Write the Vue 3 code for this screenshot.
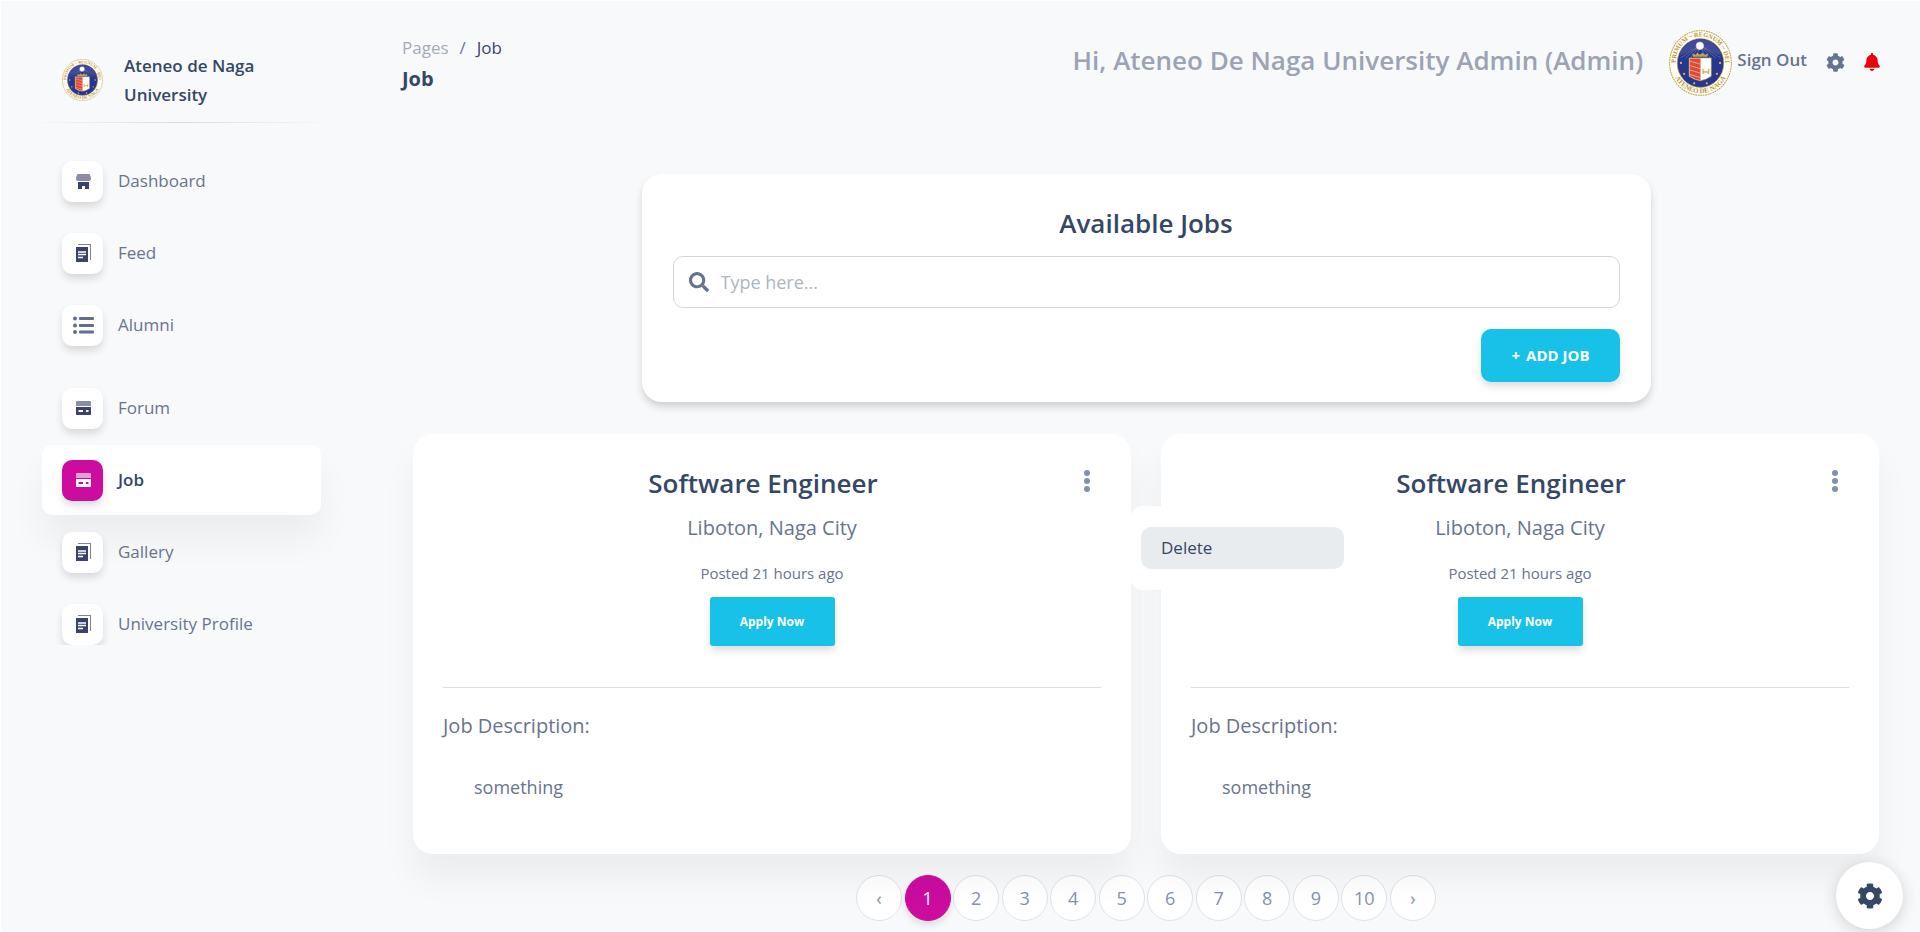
<script setup>
import { ref, h } from 'vue'

const nav = [
  { label: 'Dashboard', icon: 'shop' },
  { label: 'Feed', icon: 'docs' },
  { label: 'Alumni', icon: 'list' },
  { label: 'Forum', icon: 'card', spaced: true },
  { label: 'Job', icon: 'card', active: true },
  { label: 'Gallery', icon: 'docs' },
  { label: 'University Profile', icon: 'docs' },
]

const jobs = [
  { id: 1, title: 'Software Engineer', place: 'Liboton, Naga City', posted: 'Posted 21 hours ago', text: 'something', menu: true },
  { id: 2, title: 'Software Engineer', place: 'Liboton, Naga City', posted: 'Posted 21 hours ago', text: 'something', menu: false },
]

const pages = ['‹', '1', '2', '3', '4', '5', '6', '7', '8', '9', '10', '›']
const current = ref('1')
const query = ref('')

const GEAR =
  'M487.4 315.7l-42.6-24.6c4.3-23.2 4.3-47 0-70.2l42.6-24.6c4.9-2.8 7.1-8.6 5.5-14-11.1-35.6-30-67.8-54.7-94.6-3.8-4.1-10-5.1-14.8-2.3L380.8 110c-17.9-15.4-38.5-27.3-60.8-35.1V25.8c0-5.6-3.9-10.5-9.4-11.7-36.7-8.2-74.3-7.8-109.2 0-5.5 1.2-9.4 6.1-9.4 11.7V75c-22.2 7.9-42.8 19.8-60.8 35.1L88.7 85.5c-4.9-2.8-11-1.9-14.8 2.3-24.7 26.7-43.6 58.9-54.7 94.6-1.7 5.4.6 11.2 5.5 14L67.3 221c-4.3 23.2-4.3 47 0 70.2l-42.6 24.6c-4.9 2.8-7.1 8.6-5.5 14 11.1 35.6 30 67.8 54.7 94.6 3.8 4.1 10 5.1 14.8 2.3l42.6-24.6c17.9 15.4 38.5 27.3 60.8 35.1v49.2c0 5.6 3.9 10.5 9.4 11.7 36.7 8.2 74.3 7.8 109.2 0 5.5-1.2 9.4-6.1 9.4-11.7v-49.2c22.2-7.9 42.8-19.8 60.8-35.1l42.6 24.6c4.9 2.8 11 1.9 14.8-2.3 24.7-26.7 43.6-58.9 54.7-94.6 1.5-5.5-.7-11.3-5.6-14.1zM256 336c-44.1 0-80-35.9-80-80s35.9-80 80-80 80 35.9 80 80-35.9 80-80 80z'

const GearIcon = () => h('svg', { viewBox: '0 0 512 512', 'aria-hidden': 'true' }, [h('path', { d: GEAR, fill: 'currentColor' })])

let sealCount = 0
const Seal = {
  setup() {
    const n = ++sealCount
    const gold = '#c2a24a'
    const ray = (x) => h('path', { d: `M50 24L${x} 44`, stroke: '#8790bf', 'stroke-width': 0.7 })
    const star = (x, y) => h('circle', { cx: x, cy: y, r: 1.8, fill: '#d8b85a' })
    const word = (id, size, text) =>
      h('text', { fill: '#b8963c', 'font-size': size, 'font-family': '"Liberation Serif", serif', 'font-weight': 700, 'text-anchor': 'middle' }, [
        h('textPath', { href: `#${id}`, startOffset: '50%' }, text),
      ])
    return () =>
      h('svg', { viewBox: '0 0 100 104', preserveAspectRatio: 'none', role: 'img', 'aria-label': 'University seal' }, [
        h('defs', [
          h('path', { id: `top${n}`, d: 'M12 62A39.500 40.500 0 1 1 88 62' }),
          h('path', { id: `low${n}`, d: 'M4 52A46 47.500 0 0 0 96 52' }),
        ]),
        h('ellipse', { cx: 50, cy: 52, rx: 49, ry: 51, fill: '#fffdf5', stroke: gold, 'stroke-width': 1.6, 'stroke-dasharray': '3 1' }),
        h('ellipse', { cx: 50, cy: 52, rx: 37, ry: 38.5, fill: '#27378f', stroke: gold, 'stroke-width': 1 }),
        word(`top${n}`, 10, 'PRIMUM ~ REGNUM ~ DEI'),
        word(`low${n}`, 11, 'ATENEO DE NAGA'),
        h('path', { d: 'M50 14a37 38 0 0 1 34 26L50 28 16 40A37 38 0 0 1 50 14z', fill: '#3f4b98' }),
        ...[18, 26, 34, 42, 58, 66, 74, 82].map(ray),
        h('circle', { cx: 49, cy: 25, r: 6, fill: '#fff', stroke: '#d9cfae', 'stroke-width': 1 }),
        h('path', { d: 'M38 42l-1-5 5 2 3-3 4 3 4-3 4 3 5-2-1 5z', fill: gold }),
        h('path', { d: 'M32 44h35v29q-9 6-17.500 7-9-1-17.500-7z', fill: '#fff', stroke: gold, 'stroke-width': 1 }),
        h('path', { d: 'M33 45h17v34q-9-1-17-6.500z', fill: '#df4a35' }),
        ...[49, 56, 63, 70].map((y) => h('path', { d: `M33 ${y}l17 5`, stroke: '#f0b39f', 'stroke-width': 1.3 })),
        h('path', { d: 'M53 69v-8h2v4h7v-4h2v8h-3v-2h-5v2z', fill: '#c9ae5e' }),
        star(19, 52), star(81, 52), star(24, 69), star(76, 69), star(40, 84), star(60, 84),
      ])
  },
}
</script>

<template>
  <div class="page">
    <aside class="sidebar">
      <a href="#" class="brand">
        <Seal class="brand-logo" />
        <span>Ateneo de Naga University</span>
      </a>
      <hr class="fade" />
      <nav class="nav" aria-label="Main">
        <a
          v-for="item in nav"
          :key="item.label"
          href="#"
          class="nav-item"
          :class="{ active: item.active, spaced: item.spaced }"
        >
          <span class="tile">
            <svg v-if="item.icon === 'shop'" width="15" height="15" viewBox="0 0 15 15" aria-hidden="true">
              <path d="M1.500 0h12L15 3.500v1.500a2 2 0 0 1-2 2H2a2 2 0 0 1-2-2V3.500z" fill="currentColor" opacity=".6" />
              <path d="M2 8h11v7H9v-3H6v3H2z" fill="currentColor" />
            </svg>
            <svg v-else-if="item.icon === 'docs'" width="15" height="18" viewBox="0 0 15 18" aria-hidden="true">
              <path d="M2 0h13v16h-1V1H2z" fill="currentColor" opacity=".65" />
              <path d="M0 3h12v15H0z" fill="currentColor" />
              <path d="M2 8h8M2 10.500h8M2 13.500h5" stroke="#fff" stroke-width="1.300" />
            </svg>
            <svg v-else-if="item.icon === 'list'" class="list" width="22" height="18" viewBox="0 0 22 18" aria-hidden="true">
              <g fill="currentColor">
                <circle cx="3" cy="2.500" r="2" /><circle cx="3" cy="9.500" r="2" /><circle cx="3" cy="16" r="2" />
                <rect x="7" y="1" width="15" height="3" rx="1" /><rect x="7" y="8" width="15" height="3" rx="1" /><rect x="7" y="14.500" width="15" height="3" rx="1" />
              </g>
            </svg>
            <svg v-else width="15" height="14" viewBox="0 0 15 14" aria-hidden="true">
              <path d="M1 0h13a1 1 0 0 1 1 1v4H0V1a1 1 0 0 1 1-1z" fill="currentColor" opacity=".6" />
              <path fill-rule="evenodd" d="M0 6h15V13a1 1 0 0 1-1 1H1a1 1 0 0 1-1-1zM2.500 9v2H7V9zM10 9v2h2.500V9z" fill="currentColor" />
            </svg>
          </span>
          <span>{{ item.label }}</span>
        </a>
      </nav>
    </aside>

    <main class="main">
      <header class="top">
        <div>
          <nav class="crumbs" aria-label="Breadcrumb">
            <a href="#">Pages</a><span class="slash">/</span><span class="here">Job</span>
          </nav>
          <h1 class="page-title">Job</h1>
        </div>
        <div class="account">
          <span class="hello">Hi, Ateneo De Naga University Admin (Admin)</span>
          <Seal class="account-logo" />
          <a href="#" class="sign-out">Sign Out</a>
          <button type="button" class="icon-btn gear" aria-label="Settings"><GearIcon /></button>
          <button type="button" class="icon-btn bell" aria-label="Notifications">
            <svg viewBox="0 0 448 512" aria-hidden="true">
              <path
                fill="currentColor"
                d="M224 512c35.300 0 63.900-28.600 63.900-64H160.100c0 35.400 28.600 64 63.900 64zm215.400-149.700c-19.300-20.800-55.500-52-55.500-154.300 0-77.700-54.500-139.900-127.900-155.200V32c0-17.700-14.300-32-32-32s-32 14.300-32 32v20.800C118.600 68.100 64.100 130.300 64.100 208c0 102.300-36.200 133.500-55.500 154.300-6 6.400-8.600 14.100-8.600 21.700.1 16.400 13 32 32.100 32h383.800c19.100 0 32-15.600 32.100-32 0-7.600-2.700-15.300-8.600-21.700z"
              />
            </svg>
          </button>
        </div>
      </header>

      <div class="content">
        <section class="search-card">
          <h2>Available Jobs</h2>
          <label class="search">
            <svg width="20" height="20" viewBox="0 0 512 512" aria-hidden="true">
              <path
                fill="currentColor"
                d="M505 442.700L405.300 343c-4.500-4.500-10.600-7-17-7H372c27.600-35.300 44-79.700 44-128C416 93.100 322.900 0 208 0S0 93.100 0 208s93.100 208 208 208c48.300 0 92.700-16.400 128-44v16.300c0 6.400 2.500 12.500 7 17l99.700 99.700c9.400 9.400 24.600 9.400 33.900 0l28.300-28.300c9.400-9.400 9.400-24.600.1-34zM208 336c-70.700 0-128-57.200-128-128 0-70.700 57.200-128 128-128 70.700 0 128 57.200 128 128 0 70.700-57.200 128-128 128z"
              />
            </svg>
            <input v-model="query" type="text" placeholder="Type here..." aria-label="Search jobs" />
          </label>
          <button type="button" class="add"><span class="plus">+</span>ADD JOB</button>
        </section>

        <section class="jobs">
          <article v-for="job in jobs" :key="job.id" class="job">
            <div class="job-head">
              <h2>{{ job.title }}</h2>
              <button type="button" class="dots" aria-label="Job options">
                <svg width="6" height="22" viewBox="0 0 6 22" aria-hidden="true">
                  <g fill="currentColor"><circle cx="3" cy="3" r="3" /><circle cx="3" cy="11" r="3" /><circle cx="3" cy="19" r="3" /></g>
                </svg>
              </button>
            </div>
            <p class="place">{{ job.place }}</p>
            <p class="posted">{{ job.posted }}</p>
            <button type="button" class="apply">Apply Now</button>
            <hr class="rule" />
            <h3>Job Description:</h3>
            <p class="text">{{ job.text }}</p>
            <div v-if="job.menu" class="menu">
              <button type="button">Delete</button>
            </div>
          </article>
        </section>

        <nav class="pager" aria-label="Pages">
          <button
            v-for="p in pages"
            :key="p"
            type="button"
            :class="{ current: p === current }"
            @click="current = p"
          >{{ p }}</button>
        </nav>
      </div>
    </main>

    <button type="button" class="fab" aria-label="Configure"><GearIcon /></button>
  </div>
</template>

<style>
body {
  background: #f8f9fb;
}
</style>

<style scoped>
.page {
  box-sizing: border-box;
  display: flex;
  min-height: 100vh;
  border: solid #fff;
  border-width: 1px 0 0 1px;
  overflow: hidden;
  color: #67748e;
  font: 18px/28px "Open Sans", "Noto Sans", sans-serif;
}
.page *,
.page *::before {
  box-sizing: border-box;
}
h1, h2, h3, p {
  margin: 0;
}
a {
  color: inherit;
  text-decoration: none;
}
button {
  padding: 0;
  border: 0;
  background: none;
  color: inherit;
  font: inherit;
  cursor: pointer;
}

.sidebar {
  flex: 0 0 380px;
  padding: 50px 46px 0 27px;
}
.brand {
  display: flex;
  align-items: center;
  gap: 21px;
  width: 250px;
  padding-left: 34px;
  color: #344767;
  font-size: 17px;
  font-weight: 600;
  line-height: 29px;
}
.brand-logo {
  flex: none;
  width: 41px;
  height: 42px;
}
.fade {
  height: 1px;
  margin: 13px 0 23px;
  border: 0;
  background: linear-gradient(90deg, transparent, #d9dbde, transparent);
}
.nav {
  display: flex;
  flex-direction: column;
  gap: 2px;
  height: 499px;
  margin: 0 -27px;
  padding: 0 41px;
  overflow: hidden;
}
.nav-item {
  display: flex;
  flex: none;
  align-items: center;
  gap: 15px;
  height: 70px;
  padding: 0 20px;
  border-radius: 10px;
  font-size: 17px;
}
.nav-item.spaced {
  margin-top: 11px;
}
.nav-item.active {
  background: #fff;
  box-shadow: 0 25px 34px rgba(0, 0, 0, 0.05);
  color: #344767;
  font-weight: 600;
}
.tile {
  display: grid;
  place-items: center;
  width: 41px;
  height: 41px;
  padding-left: 1px;
  border-radius: 10px;
  background: #fff;
  box-shadow: 0 5px 8px -1px rgba(20, 20, 20, 0.16);
  color: #3a416f;
}
.tile .list {
  color: #5f6f8c;
}
.active .tile {
  background: #cb0c9f;
  color: #fff;
}

.main {
  flex: 1;
  min-width: 0;
}
.top {
  display: flex;
  align-items: flex-start;
  justify-content: space-between;
  padding: 29px 40px 0 21px;
}
.crumbs {
  display: flex;
  gap: 11px;
  line-height: 36px;
  font-size: 17px;
}
.crumbs a {
  color: #a3abbb;
}
.here {
  color: #344767;
}
.page-title {
  color: #344767;
  font-size: 20px;
  font-weight: 700;
  line-height: 26px;
}
.account {
  display: flex;
  align-items: flex-start;
  height: 66px;
  line-height: 60px;
}
.hello {
  margin-right: 26px;
  color: #9ba3b5;
  font-size: 26px;
  font-weight: 600;
}
.account-logo {
  width: 63px;
  height: 66px;
}
.sign-out {
  margin: 0 19px 0 5px;
  font-size: 17px;
  font-weight: 600;
}
.icon-btn {
  display: grid;
  place-items: center;
  height: 64px;
  line-height: 0;
}
.gear svg {
  width: 19px;
  height: 19px;
}
.bell {
  margin-left: 19px;
  color: #ea0606;
}
.bell svg {
  width: 16px;
  height: 18px;
}

.content {
  padding: 78px 41px 0 32px;
}
.search-card {
  display: flex;
  flex-direction: column;
  max-width: 1009px;
  margin: 0 auto;
  padding: 31px 31px 20px;
  border-radius: 20px;
  background: #fff;
  box-shadow: 0 5px 8px -1px rgba(20, 20, 20, 0.2);
}
.search-card h2,
.job-head h2 {
  color: #344767;
  font-size: 26px;
  font-weight: 600;
  line-height: 36px;
  text-align: center;
}
.search {
  display: flex;
  align-items: center;
  gap: 12px;
  height: 52px;
  margin: 15px 0 21px;
  padding: 0 15px;
  border: 1px solid #d2d6da;
  border-radius: 10px;
}
.search input {
  flex: 1;
  padding: 0;
  border: 0;
  outline: 0;
  background: none;
  color: #495057;
  font: inherit;
}
.search input::placeholder {
  color: #adb5bd;
  opacity: 1;
}
.add {
  align-self: flex-end;
  height: 53px;
  padding: 0 30px 2px;
  border-radius: 10px;
  background: #17c1e8;
  box-shadow: 0 5px 9px -1px rgba(0, 0, 0, 0.15);
  color: #fff;
  font-size: 15px;
  font-weight: 700;
}
.plus {
  margin-right: 6px;
}

.jobs {
  display: grid;
  grid-template-columns: 1fr 1fr;
  gap: 30px;
  margin-top: 32px;
}
.job {
  position: relative;
  display: flex;
  flex-direction: column;
  align-items: center;
  min-height: 420px;
  padding: 30px 30px 0;
  border-radius: 20px;
  background: #fff;
  box-shadow: 0 25px 34px rgba(0, 0, 0, 0.05);
}
.job:first-child {
  z-index: 1;
}
.job-head {
  display: flex;
  align-self: stretch;
  align-items: center;
}
.job-head h2 {
  flex: 1;
  padding-left: 4px;
  line-height: 38px;
}
.dots {
  width: 16px;
  margin-right: 6px;
  padding-bottom: 4px;
  color: #8392ab;
  line-height: 0;
}
.place {
  margin-top: 12px;
  font-size: 20px;
}
.posted {
  margin-top: 18px;
  font-size: 15px;
  line-height: 26px;
}
.apply {
  flex: none;
  width: 125px;
  height: 49px;
  margin-top: 11px;
  border-radius: 3px;
  background: #17c1e8;
  box-shadow: 0 5px 9px -1px rgba(0, 0, 0, 0.15);
  color: #fff;
  font-size: 12px;
  font-weight: 700;
}
.rule {
  align-self: stretch;
  margin: 41px 0 24px;
  border: 0;
  border-top: 1px solid #dcdee3;
}
.job h3 {
  align-self: flex-start;
  font-size: 20px;
  font-weight: 400;
}
.text {
  align-self: flex-start;
  margin: 33px 0 0 31px;
}
.menu {
  position: absolute;
  top: 72px;
  left: 100%;
  width: 223px;
  padding: 21px 10px;
  border-radius: 10px;
  background: #fff;
}
.menu button {
  display: block;
  width: 100%;
  height: 42px;
  padding: 0 20px;
  border-radius: 10px;
  background: #e9ecef;
  color: #344767;
  font-size: 17px;
  text-align: left;
}

.pager {
  display: flex;
  justify-content: space-between;
  width: 580px;
  margin: 21px auto 0;
}
.pager button {
  width: 46px;
  height: 46px;
  border: 1px solid #dee2e6;
  border-radius: 50%;
  background: #fff;
  color: #8392ab;
}
.pager .current {
  border-color: #cb0c9f;
  background: #cb0c9f;
  box-shadow: 0 4px 7px rgba(0, 0, 0, 0.12);
  color: #fff;
}
.fab {
  position: fixed;
  right: 17px;
  bottom: 3px;
  z-index: 2;
  display: grid;
  place-items: center;
  width: 67px;
  height: 67px;
  border-radius: 50%;
  background: #fff;
  box-shadow: 0 3px 15px rgba(0, 0, 0, 0.16);
  color: #344767;
}
.fab svg {
  width: 26px;
  height: 26px;
}
</style>
